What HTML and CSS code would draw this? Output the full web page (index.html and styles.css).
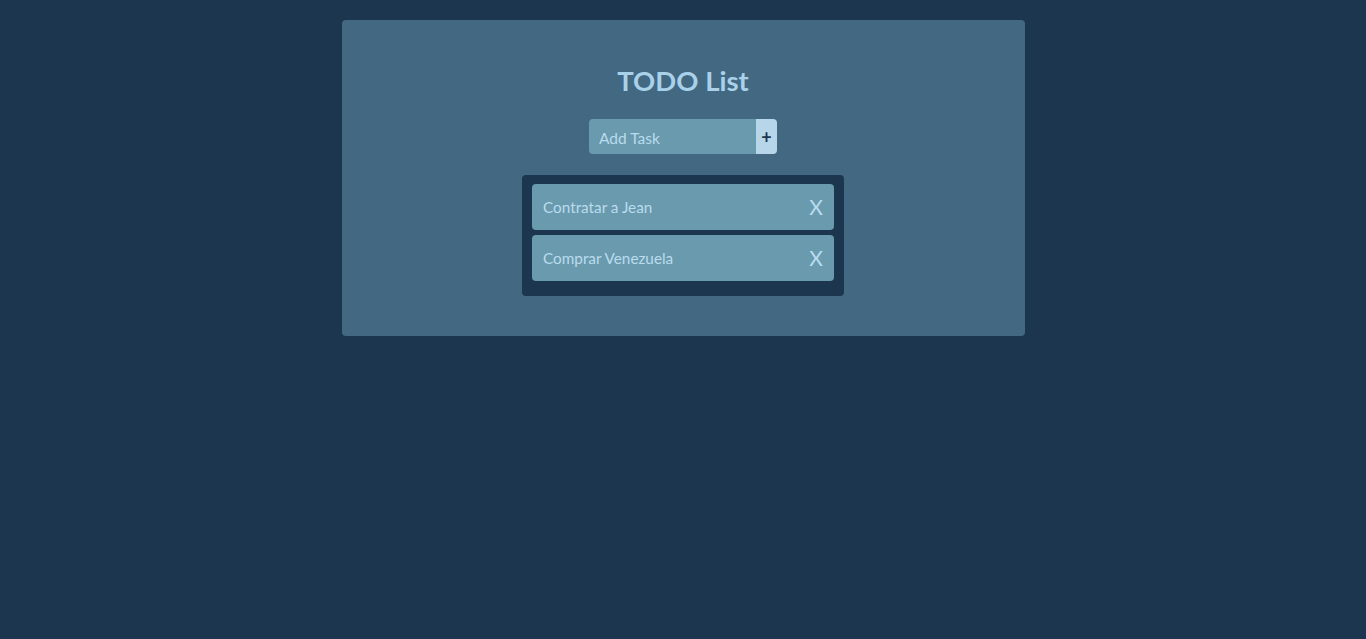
FILE: index.html
```html
<!DOCTYPE html>
<html lang="es">
<head>
<meta charset="utf-8">
<title>TODO List</title>
<link rel="stylesheet" href="styles.css">
</head>
<body>
  <main class="card">
    <h1 class="title">TODO List</h1>
    <form class="add-form">
      <input class="add-input" type="text" placeholder="Add Task">
      <button class="add-btn" type="button">+</button>
    </form>
    <ul class="list">
      <li class="item"><span class="item-text">Contratar a Jean</span><span class="item-del">X</span></li>
      <li class="item"><span class="item-text">Comprar Venezuela</span><span class="item-del">X</span></li>
    </ul>
  </main>
</body>
</html>
```
FILE: styles.css
```css
html, body {
  margin: 0;
  padding: 0;
}
body {
  background: #1c364f;
  font-family: "Lato", "Liberation Sans", sans-serif;
  padding-top: 20px;
  min-height: 100vh;
  box-sizing: border-box;
}
.card {
  width: 683px;
  height: 316px;
  margin: 0 auto;
  background: #426882;
  border-radius: 4px;
  box-sizing: border-box;
  padding-top: 44px;
  display: flex;
  flex-direction: column;
  align-items: center;
}
.title {
  margin: 0;
  font-size: 27.5px;
  line-height: 34px;
  font-weight: 700;
  color: #a9d1ea;
}
.add-form {
  margin-top: 21px;
  display: flex;
  height: 35px;
}
.add-input {
  width: 167px;
  height: 35px;
  box-sizing: border-box;
  border: none;
  outline: none;
  background: #6a9aad;
  border-radius: 4px 0 0 4px;
  padding: 3px 10px 0;
  font-family: inherit;
  font-size: 15.5px;
  color: #b9dcef;
}
.add-input::placeholder {
  color: #b9dcef;
}
.add-btn {
  width: 21px;
  height: 35px;
  border: none;
  padding: 0;
  background: #b7d6e9;
  border-radius: 0 4px 4px 0;
  font-family: inherit;
  font-weight: 700;
  font-size: 18px;
  color: #1c364f;
}
.list {
  list-style: none;
  margin: 21px 0 0;
  padding: 9px 10px 15px;
  width: 322px;
  box-sizing: border-box;
  background: #1c364f;
  border-radius: 4px;
  display: flex;
  flex-direction: column;
  gap: 5px;
}
.item {
  height: 46px;
  background: #6a9aad;
  border-radius: 4px;
  display: flex;
  align-items: center;
  justify-content: space-between;
  padding: 0 11px 0 11px;
  color: #b9dcef;
}
.item-text {
  font-size: 15.3px;
}
.item-del {
  font-size: 21px;
  font-weight: 400;
  line-height: 1;
  padding-bottom: 2px;
}
```
